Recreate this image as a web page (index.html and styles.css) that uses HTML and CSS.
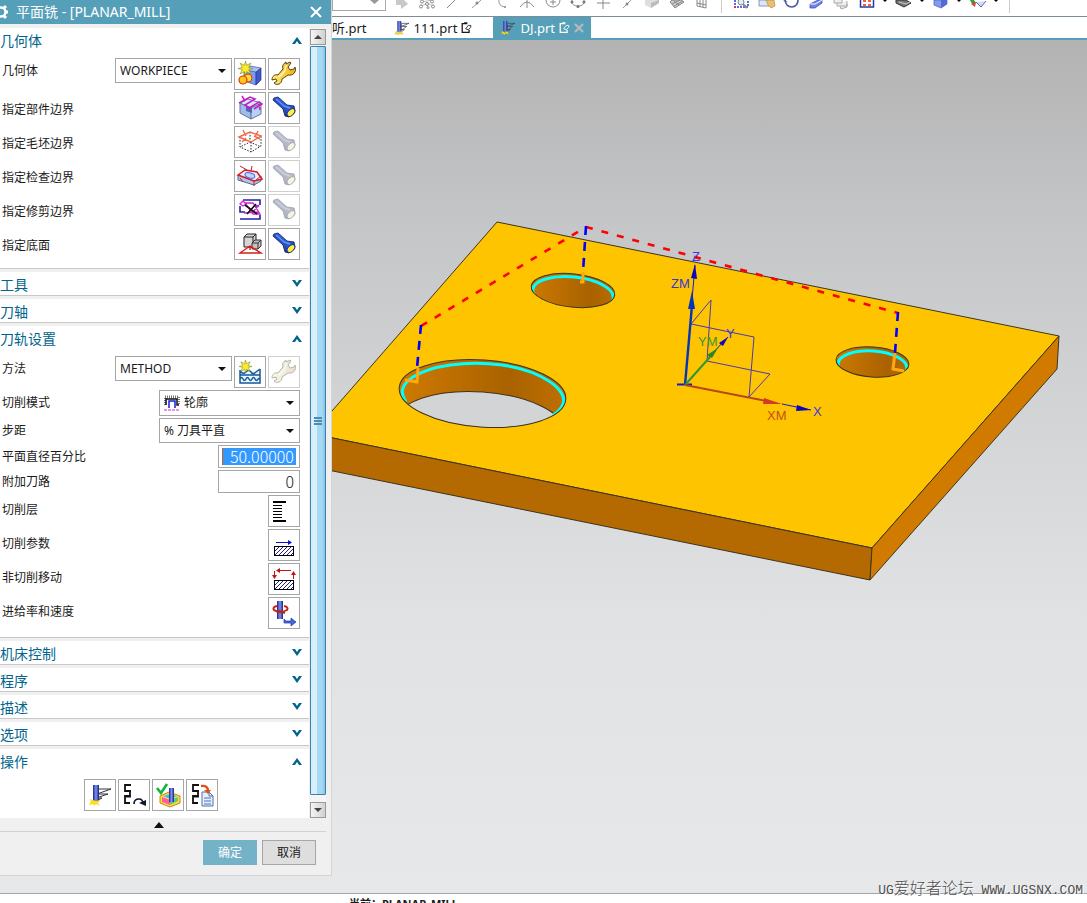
FILE: index.html
```html
<!DOCTYPE html>
<html lang="zh-CN">
<head>
<meta charset="utf-8">
<title>平面铣 - [PLANAR_MILL]</title>
<link rel="stylesheet" href="styles.css">
</head>
<body>
<svg class="defs" aria-hidden="true">
  <defs>
    <linearGradient id="blueBar"><stop offset="0" stop-color="#1a2a8c"/><stop offset=".5" stop-color="#7d92f5"/><stop offset="1" stop-color="#18207a"/></linearGradient>
    <linearGradient id="torchG" x1="0" y1="1" x2="1" y2="0"><stop offset="0" stop-color="#0a1464"/><stop offset=".6" stop-color="#2f62e0"/><stop offset="1" stop-color="#0c1f88"/></linearGradient>
    <linearGradient id="goldG"><stop offset="0" stop-color="#fff27a"/><stop offset="1" stop-color="#f0b010"/></linearGradient>
    <symbol id="torch" viewBox="0 0 30 30">
      <path d="M4 7l1-2 4-1 9 8 7 1 1 5-6 6-4-1-2-7z" fill="url(#torchG)" stroke="#0a1458" stroke-width=".8"/>
      <path d="M7 6l8 7 6 2" fill="none" stroke="#5f94ff" stroke-width="1.400"/>
      <ellipse cx="22" cy="19.500" rx="4.600" ry="2.800" transform="rotate(-45 22 19.500)" fill="#ffef3e" stroke="#20307c"/>
    </symbol>
    <symbol id="wrench" viewBox="0 0 30 30">
      <path d="M17 5l4-2 1 1-3 4 2 3 4-1 1-2c2 5-2 9-7 8l-6 4c0 5-5 7-8 4l3-2-1-2-4 1c0-4 3-6 6-5l5-6c-1-3 0-5 3-7z" fill="url(#goldG)" stroke="#5a4210"/>
      <path d="M18 6c-2 2-2 4-2 6l-6 6" fill="none" stroke="#fffbd0" stroke-width="1.200"/>
    </symbol>
    <symbol id="star" viewBox="0 0 14 14">
      <path d="M7 0l1 4 4-2-2 4 4 1-4 1 2 4-4-2-1 4-1-4-4 2 2-4-4-1 4-1-2-4 4 2z" fill="#ffe92c" stroke="#7d8c30" stroke-width=".6"/>
    </symbol>
    <symbol id="mill" viewBox="0 0 18 18">
      <path d="M8 3h10l-10 4zM8 7h7l-7 5zM8 11h4l-4 3" fill="none" stroke="#444b58"/>
      <rect x="3" y="0" width="5" height="14" fill="url(#blueBar)"/>
      <path d="M0 17l2-4 3 2 3-2 2 4-4-1-2 2-1-2z" fill="#ffdf20" stroke="#b59a20" stroke-width=".5"/>
    </symbol>
    <symbol id="sheet" viewBox="0 0 12 14">
      <path d="M7 2H1v10h8V9M4 2V1h3" fill="none" stroke="currentColor" stroke-width="1.500"/>
      <path d="M5 8l3-4h3v2L8 9z" fill="none" stroke="currentColor"/>
    </symbol>
    <symbol id="hatch" viewBox="0 0 20 10">
      <rect x=".5" y=".5" width="19" height="9" fill="#fff" stroke="#000"/>
      <path d="M1 5l4-4M1 9l8-8M5 9l8-8M9 9l8-8M13 9l6-6M17 9l2-2" stroke="#20208c"/>
    </symbol>
    <symbol id="chev" viewBox="0 0 12 10"><path d="M1 1l5 7 5-7H8L6 4 4 1z" fill="#00648c"/></symbol>
    <symbol id="coil" viewBox="0 0 10 22"><path d="M8 1H2v6h5v5H2v7h5" fill="none" stroke="#111" stroke-width="1.800"/><path d="M3 7h5M3 13h5" stroke="#111"/></symbol>
  </defs>
</svg>

<main class="app">
  <div class="toolbar">
    <div class="toolbar-combo"><svg width="10" height="5" viewBox="0 0 10 5"><path d="M0 0h9L4.500 4z" fill="#999"/></svg></div>
    <div class="tools">
      <svg viewBox="0 0 20 12"><path d="M4 0v5h5v4l7-5-4-4z" fill="#c8c8c8"/></svg>
      <svg viewBox="0 0 20 12"><path d="M5 2l10-2M4 6l7-3 6 4" fill="none" stroke="#bbb"/><g fill="#fff" stroke="#888"><circle cx="5" cy="1.500" r="1.500"/><circle cx="15" cy="1.500" r="1.500"/><circle cx="4" cy="6.500" r="1.500"/><circle cx="10" cy="4" r="1.500"/><circle cx="16" cy="6.500" r="1.500"/><circle cx="11" cy="7.500" r="1"/></g></svg>
      <svg viewBox="0 0 20 12"><path d="M5 8l8-8" stroke="#888"/></svg>
      <svg viewBox="0 0 20 12"><path d="M5 8l9-8" stroke="#999"/><circle cx="10" cy="3" r="1.500" fill="#888"/></svg>
      <svg viewBox="0 0 20 12"><path d="M7 0q-1 6 6 7" fill="none" stroke="#999"/><circle cx="13" cy="7" r="1" fill="#888"/></svg>
      <svg viewBox="0 0 20 12"><path d="M10 0v8M3 7q7-10 14 0" fill="none" stroke="#888"/></svg>
      <svg viewBox="0 0 20 12"><path d="M4 0a7 7 0 1 0 14 0" fill="none" stroke="#888"/><path d="M11 0v5M8 2h6" stroke="#888"/></svg>
      <svg viewBox="0 0 20 12"><path d="M5 0q-1 6 6 6t6-6" fill="none" stroke="#999"/><circle cx="5" cy="2" r="1.500" fill="#777"/><circle cx="17" cy="2" r="1.500" fill="#777"/><circle cx="11" cy="6.500" r="1.500" fill="#777"/></svg>
      <svg viewBox="0 0 20 12"><path d="M11 0v9M5 3h13" stroke="#888"/></svg>
      <svg viewBox="0 0 20 12"><path d="M6 8l8-8" stroke="#999"/><circle cx="10" cy="4" r="1.500" fill="#888"/></svg>
      <svg viewBox="0 0 20 12"><path d="M3 0v5l6 3 8-5V0z" fill="#dedede"/><path d="M9 8V3l8-3v3z" fill="#bbb"/></svg>
      <svg viewBox="0 0 20 12"><path d="M3 2l5 6 9-6-3-2H5z" fill="#ccc" stroke="#888"/><path d="M5 4l8-4M7 6l9-5M6 0l6 5" stroke="#888"/></svg>
      <svg viewBox="0 0 20 12"><path d="M5 0v6l9 2V0M5 3l9 2M8 0v7M11 0v7" fill="none" stroke="#888"/></svg>
    </div>
    <span class="tool-sep"></span>
    <div class="tools">
      <svg viewBox="0 0 20 12"><path d="M3 0v7h13V0" fill="none" stroke="#1e3ce0" stroke-width="1.500" stroke-dasharray="2 1"/><circle cx="9" cy="2" r="3" fill="#dbeef8" stroke="#888"/><path d="M11 4l4 4" stroke="#888" stroke-width="2"/><path d="M2 6h2v2H2z" fill="#e03030"/></svg>
      <svg viewBox="0 0 20 12"><path d="M2 0v6h13V0z" fill="#dce8f8" stroke="#8a96b8"/><path d="M9 0l2 5 3 3 4-2-1-6z" fill="#e8c070" stroke="#a98340" stroke-width=".6"/></svg>
      <svg viewBox="0 0 20 12"><path d="M3 0q1 7 7 7 6-1 6-7" fill="none" stroke="#4a5aa0" stroke-width="1.600"/><path d="M1 1l2-1 3 2z" fill="#4a5aa0"/></svg>
      <svg viewBox="0 0 20 12"><path d="M3 4l8-4h4v3L8 8H3z" fill="#6d85ee" stroke="#3542a0" stroke-width=".7"/><path d="M3 4h5l7-4" stroke="#fff" fill="none"/></svg>
      <svg viewBox="0 0 20 12"><path d="M2 0v3h8V0M5 3v3h10V1M8 6l1 3 6-2V4" fill="#eee" stroke="#aaa"/></svg>
    </div>
    <div class="tools tools-menu">
      <svg viewBox="0 0 32 12"><rect x="3.500" y="-2" width="13" height="9" fill="#fff" stroke="#2738a8" stroke-width="1.500"/><path d="M6 0h3v2H6zM11 0h3v2h-3zM6 4h3v2H6zM11 4h3v2h-3z" fill="#f06040"/><path d="M26 0h4l-2 2z"/></svg>
      <svg viewBox="0 0 32 12"><path d="M2 0v3l8 4 7-4-5-3z" fill="#777" stroke="#333"/><path d="M5 2l7 2 4-2" stroke="#ccc" fill="none"/><path d="M26 0h4l-2 2z"/></svg>
      <svg viewBox="0 0 32 12"><path d="M3 0v5l7 3 6-4V0z" fill="#849cf0" stroke="#4a5ab0" stroke-width=".7"/><path d="M10 8V0h6v4z" fill="#536bd2"/><path d="M26 0h4l-2 2z"/></svg>
      <svg viewBox="0 0 32 12"><path d="M2 0h4l2 3-4 1z" fill="#30a040"/><path d="M3 4l5-2-1 5z" fill="#e04040"/><path d="M8 2l5 5 5-6" fill="#d0dafc" stroke="#5868b8"/><path d="M26 0h4l-2 2z"/></svg>
    </div>
    <span class="tool-sep"></span>
  </div>

  <nav class="tabs">
    <button class="tab tab-first" type="button">视听.prt</button>
    <button class="tab" type="button"><svg width="16" height="14"><use href="#mill"/></svg><span>111.prt</span><svg width="11" height="12"><use href="#sheet"/></svg></button>
    <button class="tab tab-active" type="button"><svg width="16" height="14"><use href="#mill"/></svg><span>DJ.prt</span><svg width="11" height="12"><use href="#sheet"/></svg><svg width="10" height="10" viewBox="0 0 10 10"><path d="M1 1l8 8M9 1L1 9" stroke="#b9b9b9" stroke-width="2.200"/></svg></button>
  </nav>

  <section class="viewport">
    <svg class="scene" viewBox="0 40 1087 852" preserveAspectRatio="xMinYMin meet">
      <defs>
        <linearGradient id="wall"><stop offset="0" stop-color="#d07b00"/><stop offset=".65" stop-color="#a96200"/><stop offset="1" stop-color="#c07000"/></linearGradient>
        <clipPath id="c1"><ellipse cx="573" cy="290.500" rx="42" ry="16.700" transform="rotate(6 573 290.500)"/></clipPath>
        <clipPath id="c2"><ellipse cx="482.500" cy="393.500" rx="83.500" ry="33.500" transform="rotate(4 482.500 393.500)"/></clipPath>
        <clipPath id="c3"><ellipse cx="872.500" cy="362" rx="36.500" ry="15" transform="rotate(4 872.500 362)"/></clipPath>
      </defs>
      <g stroke="#3c3420" stroke-width="1">
        <path d="M497 222L1059 336 872 548 318 435V427z" fill="#ffc400"/>
        <path d="M318 435L872 548 870 580 318 468z" fill="#b46a00"/>
        <path d="M872 548L1059 336 1057 369 870 580z" fill="#d07b00"/>
      </g>
      <g clip-path="url(#c1)"><path d="M525 265h100v50H525z" fill="url(#wall)"/><ellipse cx="573" cy="294" rx="40.500" ry="17" transform="rotate(6 573 294)" fill="none" stroke="#00ffff" stroke-width="3"/></g>
      <g clip-path="url(#c2)"><path d="M395 355h175v80H395z" fill="url(#wall)"/><ellipse cx="480.500" cy="425.500" rx="83.500" ry="33.500" transform="rotate(4 480.500 425.500)" fill="#d3d4d6" stroke="#3c3420"/><path d="M406 402Q396 388 413 377C430 366 466 360 502 365C544 371 568 391 563 404Q560 411 553 415" fill="none" stroke="#00ffff" stroke-width="3"/></g>
      <g clip-path="url(#c3)"><path d="M830 340h90v45h-90z" fill="url(#wall)"/><ellipse cx="872.500" cy="366" rx="34.500" ry="15" transform="rotate(4 872.500 366)" fill="none" stroke="#00ffff" stroke-width="3"/></g>
      <g fill="none" stroke="#3c3420">
        <ellipse cx="573" cy="290.500" rx="42" ry="16.700" transform="rotate(6 573 290.500)"/>
        <ellipse cx="482.500" cy="393.500" rx="83.500" ry="33.500" transform="rotate(4 482.500 393.500)"/>
        <ellipse cx="872.500" cy="362" rx="36.500" ry="15" transform="rotate(4 872.500 362)"/>
      </g>
      <g fill="none" stroke="#ffa90a" stroke-width="3">
        <path d="M583 272v10h-3M418 368l-1 14-12-2M895 353l-2 16 11 2"/>
      </g>
      <g fill="none" stroke-width="2.600">
        <path d="M421 326L586 227" stroke="#f00" stroke-dasharray="7 9"/>
        <path d="M586 227L898 313" stroke="#f00" stroke-dasharray="7 9"/>
        <path d="M586 226L583 272M421 325L417 368M898 312L895 353" stroke="#00f" stroke-dasharray="9 7"/>
      </g>
      <g fill="none" stroke="#4a38b8" stroke-width="1">
        <path d="M691 324L711 300 707 361 770 374 749 397 754 337z"/>
        <path d="M692 300L695 265M708 358L728 337M782 404L811 410" stroke="#1818d0"/>
        <path d="M677 384.500h15" stroke="#1818d0" stroke-width="2"/>
      </g>
      <path d="M685 385L692 305" stroke="#0434b8" stroke-width="2.400"/>
      <path d="M685 385L710 357" stroke="#329632" stroke-width="2"/>
      <path d="M685 385L766 401" stroke="#b24818" stroke-width="2"/>
      <path d="M692 291L695 309H688z" fill="#0434b8"/>
      <path d="M695 264L697 279 691 278zM728 337L723 346 719 343zM811 410L797 405 796 411z" fill="#0808b8"/>
      <path d="M718 348L712 358 707 355z" fill="#2b8820"/>
      <path d="M782 404L764 398 763 404z" fill="#d43a28"/>
      <g class="axis-label">
        <text x="692" y="261" fill="#3838e8">Z</text><text x="671" y="288" fill="#3838d0">ZM</text>
        <text x="726" y="338" fill="#3838e8">Y</text><text x="698" y="346" fill="#3f9232">YM</text>
        <text x="813" y="416" fill="#3838e8">X</text><text x="767" y="420" fill="#c2501c">XM</text>
      </g>
    </svg>
    <div class="watermark">UG<span>爱好者论坛</span> WWW.UGSNX.COM</div>
  </section>
  <footer class="status">当前：PLANAR_MILL</footer>
</main>

<form class="dialog" onsubmit="return false">
  <header class="titlebar">
    <svg width="12" height="16" viewBox="0 0 12 16"><circle cx="1" cy="8" r="4.500" fill="none" stroke="#fff" stroke-width="2.500"/><path d="M5 8h3M4 4l2-2M4 12l2 2" stroke="#fff" stroke-width="3"/></svg>
    <h1>平面铣 - [PLANAR_MILL]</h1>
    <button class="close" type="button" aria-label="关闭"><svg width="12" height="12" viewBox="0 0 12 12"><path d="M1 1l10 10M11 1L1 11" stroke="#fff" stroke-width="2"/></svg></button>
  </header>

  <div class="dialog-main">
    <div class="sections">
      <section class="section">
        <button class="section-head" type="button">几何体<svg class="up" width="12" height="10"><use href="#chev"/></svg></button>
        <div class="rows">
          <div class="row">
            <label for="geo">几何体</label>
            <span class="combo combo-small"><select id="geo"><option>WORKPIECE</option></select></span>
            <button class="icon-btn" type="button" aria-label="新建几何体"><svg viewBox="0 0 30 30"><path d="M9 11l6-4 11 2-4 5-12-1z" fill="#a9c0f8" stroke="#4656a8" stroke-width=".7"/><path d="M9 11l12 2v13L9 22z" fill="#7b9cf0" stroke="#4656a8" stroke-width=".7"/><path d="M21 13l5-4v12l-5 5z" fill="#3f58c8" stroke="#28388c" stroke-width=".7"/><use href="#star" x="3" y="2" width="15" height="15"/><circle cx="13" cy="19" r="4" fill="#ffe22c" stroke="#e03810"/><circle cx="8" cy="21" r="4" fill="#ffc61c" stroke="#e03810" stroke-width="1.200"/></svg></button>
            <button class="icon-btn" type="button" aria-label="编辑"><svg><use href="#wrench"/></svg></button>
          </div>
          <div class="row">
            <span class="name low">指定部件边界</span>
            <button class="icon-btn" type="button" aria-label="选择部件边界"><svg viewBox="0 0 30 30"><path d="M5 10l11 5v11L5 20z" fill="#9fbbea" stroke="#607898"/><path d="M16 15l10-5v11l-10 5z" fill="#b9d0f5" stroke="#607898"/><path d="M5 10l8-4 13 4-10 5z" fill="#d9e4ff" stroke="#607898"/><path d="M11 18v-6l6 3v5z" fill="#5565b0"/><path d="M4 10l11-6 5 2-10 6 4 3 10-6 3 2-8 5M7 3l3 5M25 17l-1-6" fill="none" stroke="#c818c8" stroke-width="1.500"/></svg></button>
            <button class="icon-btn" type="button" aria-label="显示"><svg><use href="#torch"/></svg></button>
          </div>
          <div class="row">
            <span class="name low">指定毛坯边界</span>
            <button class="icon-btn" type="button" aria-label="选择毛坯边界"><svg viewBox="0 0 30 30"><path d="M5 10v10l11 5 10-6V9M16 15v10M15 5v10L5 20M15 15l11 5" fill="none" stroke="#222" stroke-dasharray="1.500 1.500"/><path d="M4 10l11-5 11 4-10 6zM8 3l3 6M23 4l-3 6M7 15l4-4M19 9l6 3" fill="none" stroke="#f26a4c" stroke-width="1.400"/></svg></button>
            <button class="icon-btn" type="button" aria-label="显示" disabled><svg><use href="#torch"/></svg></button>
          </div>
          <div class="row">
            <span class="name low">指定检查边界</span>
            <button class="icon-btn" type="button" aria-label="选择检查边界"><svg viewBox="0 0 30 30"><path d="M3 14v5l16 5 7-4v-5" fill="#afc5ea" stroke="#50688c"/><path d="M3 14l7-5 12 2 5 7-8 2z" fill="#e6eeff" stroke="#d01c20" stroke-width="1.500"/><ellipse cx="15" cy="14.500" rx="5" ry="2.500" transform="rotate(15 15 14)" fill="#c5d5ff" stroke="#4c60e0"/><path d="M5 5l7 4M17 5l-1 5M19 20v5M5 17l3 4M26 15l-5 4" stroke="#d01c20"/></svg></button>
            <button class="icon-btn" type="button" aria-label="显示" disabled><svg><use href="#torch"/></svg></button>
          </div>
          <div class="row">
            <span class="name low">指定修剪边界</span>
            <button class="icon-btn" type="button" aria-label="选择修剪边界"><svg viewBox="0 0 30 30"><path d="M8 5h17v5M5 11v6h5M5 24h20v-4M20 11h4" fill="none" stroke="#2020b0" stroke-width="1.600"/><path d="M5 9l3-3 3 3-3 2zM10 8h8l7 11h-7zM9 18l15-1M24 10l-7 8" fill="none" stroke="#d020d0" stroke-width="1.300"/><path d="M10 10l12 9M21 9l-9 10" stroke="#111" stroke-width="1.600"/></svg></button>
            <button class="icon-btn" type="button" aria-label="显示" disabled><svg><use href="#torch"/></svg></button>
          </div>
          <div class="row">
            <span class="name low">指定底面</span>
            <button class="icon-btn" type="button" aria-label="选择底面"><svg viewBox="0 0 30 30"><path d="M9 8l3-3h9v10l-3 3H9z" fill="#d6d6d6" stroke="#222"/><path d="M9 8h9v10M18 8l3-3" fill="none" stroke="#222"/><path d="M17 14l3-3h6v6l-3 3h-6z" fill="#c2c2c2" stroke="#333"/><path d="M17 14h6v6M23 14l3-3" fill="none" stroke="#333"/><path d="M5 24l10-7 11 7zM15 17v4" fill="none" stroke="#d81c1c" stroke-width="1.400"/></svg></button>
            <button class="icon-btn" type="button" aria-label="显示"><svg><use href="#torch"/></svg></button>
          </div>
        </div>
      </section>
      <section class="section"><button class="section-head" type="button">工具<svg width="12" height="10"><use href="#chev"/></svg></button></section>
      <section class="section"><button class="section-head" type="button">刀轴<svg width="12" height="10"><use href="#chev"/></svg></button></section>
      <section class="section">
        <button class="section-head" type="button">刀轨设置<svg class="up" width="12" height="10"><use href="#chev"/></svg></button>
        <div class="rows">
          <div class="row">
            <label for="method">方法</label>
            <span class="combo combo-small"><select id="method"><option>METHOD</option></select></span>
            <button class="icon-btn" type="button" aria-label="新建方法"><svg viewBox="0 0 30 30"><path d="M5 14v12h20V12l-4 3-4-2-4 3-4-3z" fill="#eef6ff"/><path d="M5 13v13h20V12M5 14q3 4 6 1t5 0 5 0l4-3M5 18h20M5 22q1.500-3 3 0t3 0 3 0 3 0 3 0 3 0l2-1" fill="none" stroke="#145a96" stroke-width="1.500"/><use href="#star" x="4" y="3" width="13" height="13"/></svg></button>
            <button class="icon-btn" type="button" aria-label="编辑方法" disabled><svg><use href="#wrench"/></svg></button>
          </div>
          <div class="row">
            <label for="mode">切削模式</label>
            <span class="combo combo-wide combo-icon"><svg width="16" height="16" viewBox="0 0 16 16"><path d="M1 10V2h14v8" fill="none" stroke="#777" stroke-width="3" stroke-dasharray="1 1"/><path d="M2 10V4h11v6h2" fill="none" stroke="#111" stroke-width="1.500"/><path d="M5 13V6h6v7" fill="none" stroke="#1020d8" stroke-width="1.500"/><path d="M0 15h16" stroke="#e020e0" stroke-width="1.200" stroke-dasharray="3 1"/></svg><select id="mode"><option>轮廓</option></select></span>
          </div>
          <div class="row">
            <label for="step">步距</label>
            <span class="combo combo-wide"><select id="step"><option>% 刀具平直</option></select></span>
          </div>
          <div class="row">
            <label class="tight" for="percent">平面直径百分比</label>
            <span class="field field-selected"><input id="percent" type="text" value="50.00000"></span>
          </div>
          <div class="row">
            <label class="tight" for="passes">附加刀路</label>
            <span class="field"><input id="passes" type="text" value="0"></span>
          </div>
          <div class="row">
            <span class="name">切削层</span>
            <button class="icon-btn" type="button" aria-label="切削层"><svg viewBox="0 0 30 30"><path d="M4 6h13M4 25h13" stroke="#000" stroke-width="2"/><path d="M4 9.500h9M4 12.500h9M4 15.500h9M4 18.500h9M4 21.500h9" stroke="#000"/></svg></button>
          </div>
          <div class="row">
            <span class="name">切削参数</span>
            <button class="icon-btn" type="button" aria-label="切削参数"><svg viewBox="0 0 30 30"><path d="M7 12.500h13" stroke="#1010c8"/><path d="M19 10l4 2.500-4 2.500z" fill="#1010c8"/><use href="#hatch" x="5" y="16" width="20" height="10"/></svg></button>
          </div>
          <div class="row">
            <span class="name">非切削移动</span>
            <button class="icon-btn" type="button" aria-label="非切削移动"><svg viewBox="0 0 30 30"><path d="M9 6.500h13M5.500 7v6M24.500 8v7" stroke="#c81010"/><path d="M11 4v5L7 6.500zM3 11h5l-2.500 4zM22 11h5l-2.500-4z" fill="#c81010"/><use href="#hatch" x="5" y="16" width="20" height="10"/></svg></button>
          </div>
          <div class="row">
            <span class="name">进给率和速度</span>
            <button class="icon-btn" type="button" aria-label="进给率和速度"><svg viewBox="0 0 30 30"><rect x="8" y="3" width="6" height="18" fill="url(#blueBar)"/><path d="M15 8q5 1 3 4-7 4-13 0-2-3 3-4M10 13l6 2" fill="none" stroke="#c82010" stroke-width="2"/><path d="M15 21l2 2h5v-3l5 4-5 4v-3h-7z" fill="#4068e8" stroke="#2438a0" stroke-width=".7"/></svg></button>
          </div>
        </div>
      </section>
      <section class="section"><button class="section-head" type="button">机床控制<svg width="12" height="10"><use href="#chev"/></svg></button></section>
      <section class="section"><button class="section-head" type="button">程序<svg width="12" height="10"><use href="#chev"/></svg></button></section>
      <section class="section"><button class="section-head" type="button">描述<svg width="12" height="10"><use href="#chev"/></svg></button></section>
      <section class="section"><button class="section-head" type="button">选项<svg width="12" height="10"><use href="#chev"/></svg></button></section>
      <section class="section section-last">
        <button class="section-head" type="button">操作<svg class="up" width="12" height="10"><use href="#chev"/></svg></button>
        <div class="actions">
          <button class="icon-btn" type="button" aria-label="生成"><svg viewBox="0 0 30 30"><path d="M12 9h14l-14 5zM10 14h13l-12 4zM10 18h7l-6 3" fill="none" stroke="#333"/><rect x="8" y="5" width="6" height="16" fill="url(#blueBar)"/><path d="M4 25l2-4-2-2 4 1 3 1 4-1-2 3 2 3-4-2-2 2-1-2z" fill="#ffdc20"/></svg></button>
          <button class="icon-btn" type="button" aria-label="重播"><svg viewBox="0 0 30 30"><use href="#coil" x="4" y="4" width="10" height="22"/><path d="M15 24q0-5 5-5 4 0 4 5" fill="none" stroke="#101830" stroke-width="1.600"/><path d="M20 23l7-3v6z" fill="#101830"/></svg></button>
          <button class="icon-btn" type="button" aria-label="确认"><svg viewBox="0 0 30 30"><path d="M7 16l9-4 11 4v7l-10 4-10-4z" fill="#ffdc38" stroke="#d08410"/><path d="M9 17l8 3v5l-8-3z" fill="#ff5fa0"/><path d="M17 20l8-3v4l-8 4z" fill="#50d080"/><path d="M10 16l7-2 7 2-7 3z" fill="#45bcf4"/><rect x="16" y="8" width="5" height="14" fill="url(#blueBar)"/><path d="M4 8l4 5 6-9" fill="none" stroke="#12b43c" stroke-width="2.600"/></svg></button>
          <button class="icon-btn" type="button" aria-label="列表"><svg viewBox="0 0 30 30"><use href="#coil" x="4" y="4" width="10" height="22"/><path d="M15 12h7l4 4v10H15z" fill="#e3eeff" stroke="#5570b0"/><path d="M17 18h7M17 21h7M17 24h7M22 12v4h4" fill="none" stroke="#5570b0"/><path d="M14 6q7-1 7 5" fill="none" stroke="#e05018" stroke-width="2.400"/><path d="M17 10h7l-3 4z" fill="#e05018"/></svg></button>
        </div>
      </section>
    </div>
    <div class="scrollbar" aria-hidden="true">
      <span class="scroll-btn"><svg width="8" height="4" viewBox="0 0 8 4"><path d="M0 4h8L4 0z" fill="#444"/></svg></span>
      <span class="thumb"><i></i><i></i><i></i></span>
      <span class="scroll-btn"><svg width="8" height="4" viewBox="0 0 8 4"><path d="M0 0h8L4 4z" fill="#444"/></svg></span>
    </div>
  </div>

  <div class="collapse"><svg width="10" height="6" viewBox="0 0 10 6"><path d="M0 6h10L5 0z" fill="#111"/></svg></div>
  <div class="buttons">
    <button class="btn btn-ok" type="submit">确定</button>
    <button class="btn" type="button">取消</button>
  </div>
</form>
</body>
</html>
```
FILE: styles.css
```css
* { box-sizing: border-box; }

body {
  margin: 0;
  height: 100vh;
  overflow: hidden;
  position: relative;
  background: #fff;
  color: #1a1a1a;
  font: 12px/16px "Noto Sans", "Noto Sans CJK SC", sans-serif;
}

button, input, select {
  margin: 0;
  padding: 0;
  border: 0;
  background: none;
  color: inherit;
  font: inherit;
}

svg { display: block; flex: none; }
.defs { position: absolute; width: 0; height: 0; }

.app { display: flex; flex-direction: column; height: 100%; }

/* Toolbar and file tabs */
.toolbar {
  display: flex;
  flex: none;
  height: 17px;
  padding-left: 332px;
  border-bottom: 1px solid #7e8b98;
}
.toolbar-combo {
  display: flex;
  justify-content: flex-end;
  width: 54px;
  height: 11px;
  margin-right: 6px;
  padding-right: 5px;
  border: 1px solid #a8a8a8;
  border-top: 0;
}
.tools { display: flex; gap: 5px; }
.tools svg { width: 20px; height: 12px; }
.tools-menu { margin-left: 5px; }
.tools-menu svg { width: 32px; }
.tool-sep { width: 1px; height: 13px; margin: 0 10px 0 9px; background: #ccc; }

.tabs {
  display: flex;
  flex: none;
  height: 23px;
  padding-left: 319px;
  border-bottom: 2px solid #55a0b8;
  font-size: 13px;
}
.tab { display: flex; align-items: center; gap: 4px; padding: 0 21px 0 6px; white-space: nowrap; }
.tab-first { padding: 0 21px 0 0; }
.tab-active { padding: 0 7px; background: #55a0b8; color: #fff; }

/* Model view */
.viewport {
  position: relative;
  flex: 1;
  min-height: 0;
  background: linear-gradient(#b3b3b3 0%, #c5c6c8 22%, #d3d4d6 44%, #e0e2e4 68%, #e6e8ea 100%);
  border-bottom: 1px solid #a5a5a5;
}
.scene { width: 100%; height: 100%; }
.axis-label { font: 13px "Liberation Sans", sans-serif; }
.watermark {
  position: absolute;
  right: 4px;
  bottom: -8px;
  color: #4e4e4e;
  font: 13px/20px "Liberation Mono", monospace;
  text-shadow: 1px 1px #fff;
  white-space: nowrap;
}
.watermark span { font: 300 16px/20px "Noto Sans CJK SC", sans-serif; }
.status {
  flex: none;
  height: 9px;
  padding: 2px 0 0 349px;
  overflow: hidden;
  font-size: 11px;
  font-weight: 700;
}

/* Operation dialog */
.dialog {
  position: absolute;
  top: 0;
  left: 0;
  width: 332px;
  background: #f0f0f0;
  border-right: 1px solid #d5d5d5;
  border-bottom: 1px solid #d5d5d5;
}
.titlebar {
  display: flex;
  align-items: center;
  gap: 4px;
  height: 24px;
  background: #55a0b8;
  color: #fff;
}
.titlebar h1 { flex: 1; margin: 0; font-size: 14px; font-weight: 400; }
.close { padding: 0 9px; }

.dialog-main { display: flex; gap: 1px; padding: 4px 5px 0 0; }
.sections { flex: 1; background: #fff; }
.section { border-bottom: 1px solid #c8c8c8; }
.section + .section { border-top: 3px solid #f0f0f0; }
.section-last { border-bottom: 0; }
.section-head {
  display: flex;
  align-items: center;
  justify-content: space-between;
  width: 100%;
  height: 23px;
  padding: 2px 6px 0 0;
  color: #00648c;
  font-size: 14px;
  text-align: left;
}
.section-head svg { margin-bottom: 2px; }
.section-head .up { transform: scaleY(-1); }

.rows { display: flex; flex-direction: column; gap: 2px; padding: 7px 9px 8px 2px; }
.row { display: flex; align-items: flex-start; gap: 2px; }
.row label { flex: 1; line-height: 25px; }
.row .tight { line-height: 23px; }
.name { flex: 1; line-height: 30px; }
.name.low { padding-top: 4px; line-height: 28px; }

.icon-btn { width: 32px; height: 32px; border: 1px solid #a6a6a6; background: #fff; }
.icon-btn svg { width: 30px; height: 30px; }
.icon-btn:disabled { border-color: #d0d0d0; }
.icon-btn:disabled svg { opacity: .4; filter: grayscale(.7); }

.combo { position: relative; display: flex; align-items: center; height: 25px; border: 1px solid #a6a6a6; }
.combo::after {
  content: "";
  position: absolute;
  right: 5px;
  top: 10px;
  border: 4px solid transparent;
  border-top-color: #111;
  border-bottom: 0;
  pointer-events: none;
}
.combo select { width: 100%; height: 100%; padding-left: 4px; appearance: none; outline: 0; }
.combo-small { width: 117px; }
.combo-wide { width: 141px; }
.combo-icon { height: 26px; padding-left: 4px; }

.field { width: 82px; height: 23px; padding: 2px 3px; border: 1px solid #a6a6a6; }
.field input {
  display: block;
  width: 100%;
  height: 17px;
  padding: 0 2px 0 0;
  outline: 0;
  font: 300 16px/17px "Noto Sans CJK SC", sans-serif;
  text-align: right;
}
.field-selected input {
  padding: 0 0 0 7px;
  border-left: 1px solid #c86414;
  background: #3399ff;
  color: #fff;
  text-align: left;
}

.actions { display: flex; justify-content: center; gap: 2px; padding: 7px 7px 7px 0; }

.scrollbar { display: flex; flex-direction: column; gap: 1px; width: 16px; padding-top: 1px; background: #f5f5f5; }
.scroll-btn {
  display: flex;
  align-items: center;
  justify-content: center;
  height: 16px;
  border: 1px solid #9a9a9a;
  background: linear-gradient(90deg, #f4f4f4, #d2d2d2);
}
.thumb {
  display: flex;
  flex: 1;
  flex-direction: column;
  align-items: center;
  justify-content: center;
  gap: 1px;
  margin-bottom: 6px;
  border: 1px solid #3c7fb1;
  border-radius: 1px;
  background: linear-gradient(90deg, #d9f0fc 0 40%, #a6d9f4 45% 80%, #86bfe0);
}
.thumb i { width: 8px; height: 2px; background: #4a8cb5; }

.collapse { display: flex; justify-content: center; height: 14px; margin-right: 5px; padding: 4px 8px 0 0; border-bottom: 1px solid #d2d2d2; }
.buttons { display: flex; justify-content: flex-end; gap: 5px; padding: 8px 15px 10px; }
.btn { width: 54px; height: 25px; border: 1px solid #a6a6a6; background: #dedede; }
.btn-ok { border-color: #74b2c8; background: #74b2c8; color: #fff; }
```
